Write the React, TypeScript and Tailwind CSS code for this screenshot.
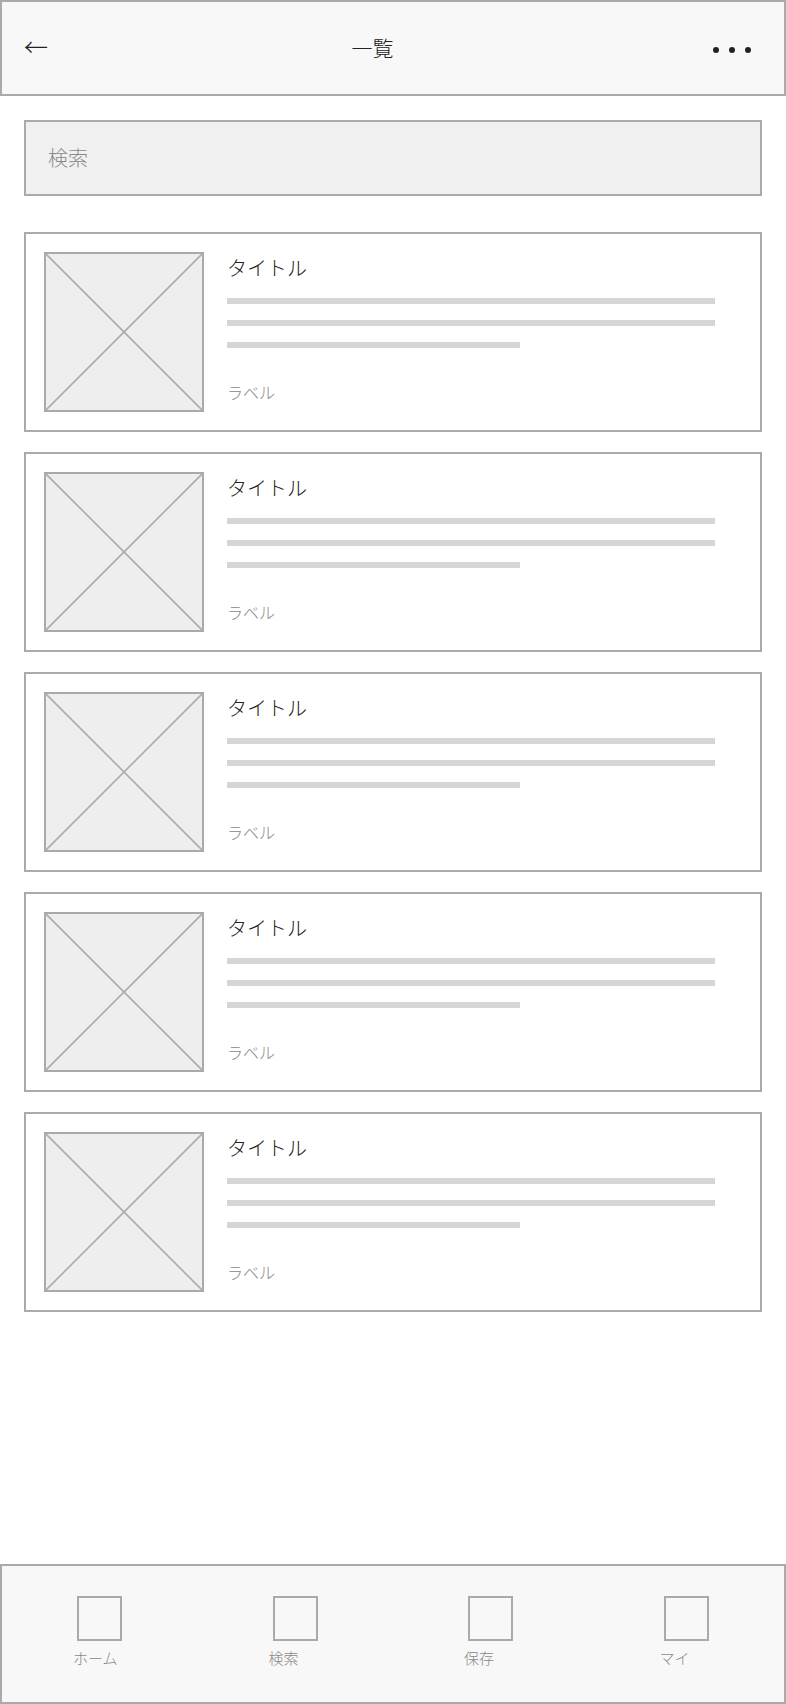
const ITEMS = [1, 2, 3, 4, 5];
const TABS = ['ホーム', '検索', '保存', 'マイ'];

function Placeholder() {
  return (
    <div className="relative w-[160px] h-[160px] shrink-0 border-2 border-[#aaaaaa] bg-[#eeeeee]">
      <svg className="absolute inset-0 w-full h-full" viewBox="0 0 100 100" preserveAspectRatio="none">
        <line x1="0" y1="0" x2="100" y2="100" stroke="#aaaaaa" strokeWidth="1.6" vectorEffect="non-scaling-stroke" />
        <line x1="100" y1="0" x2="0" y2="100" stroke="#aaaaaa" strokeWidth="1.6" vectorEffect="non-scaling-stroke" />
      </svg>
    </div>
  );
}

function Card() {
  return (
    <div className="flex border-2 border-[#aaaaaa] bg-white p-[18px]">
      <Placeholder />
      <div className="flex-1 ml-[23px] pr-[27px]">
        <p className="text-[20px] leading-[32px] text-[#222222]">タイトル</p>
        <div className="mt-[14px] flex flex-col gap-[16px]">
          <div className="h-[6px] w-full bg-[#d6d6d6]" />
          <div className="h-[6px] w-full bg-[#d6d6d6]" />
          <div className="h-[6px] w-[60%] bg-[#d6d6d6]" />
        </div>
        <p className="mt-[32px] text-[16px] leading-[24px] text-[#888888]">ラベル</p>
      </div>
    </div>
  );
}

export default function App() {
  return (
    <div
      className="min-h-screen flex flex-col bg-white font-light"
      style={{ fontFamily: '"Noto Sans CJK JP", "Noto Sans", sans-serif' }}
    >
      {/* Header */}
      <header className="h-[96px] flex items-center border-2 border-[#aaaaaa] bg-[#f8f8f8] pl-[22px] pr-[33px]">
        <span className="w-[26px] -mt-[4px] text-[24px] leading-none text-[#222222]">←</span>
        <h1 className="flex-1 text-center pr-[18px] text-[21px] text-[#222222]">一覧</h1>
        <div className="flex items-center gap-[10px] pt-[4px]">
          <span className="w-[6px] h-[6px] rounded-full bg-[#222222]" />
          <span className="w-[6px] h-[6px] rounded-full bg-[#222222]" />
          <span className="w-[6px] h-[6px] rounded-full bg-[#222222]" />
        </div>
      </header>

      <main className="flex-1 px-[24px]">
        {/* Search */}
        <div className="mt-[24px] h-[76px] flex items-center border-2 border-[#aaaaaa] bg-[#f0f0f0] px-[22px]">
          <span className="text-[20px] text-[#888888]">検索</span>
        </div>

        {/* List */}
        <div className="mt-[36px] flex flex-col gap-[20px]">
          {ITEMS.map((i) => (
            <Card key={i} />
          ))}
        </div>
      </main>

      {/* Bottom nav */}
      <nav className="h-[140px] grid grid-cols-4 border-2 border-[#aaaaaa] bg-[#f8f8f8]">
        {TABS.map((t) => (
          <div key={t} className="flex flex-col items-start pl-[71px] pt-[30px]">
            <div className="ml-[4px] w-[45px] h-[45px] border-2 border-[#aaaaaa]" />
            <span className="mt-[6px] text-[15px] leading-[22px] text-[#888888]">{t}</span>
          </div>
        ))}
      </nav>
    </div>
  );
}
